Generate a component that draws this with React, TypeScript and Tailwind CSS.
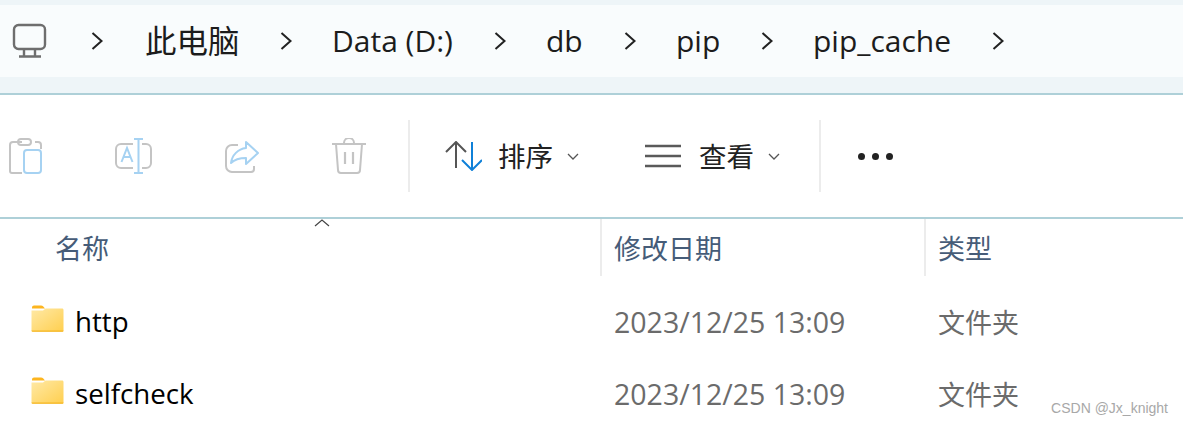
const font = "font-['Open_Sans','Noto_Sans_CJK_SC',sans-serif]";

function Chevron() {
  return (
    <svg width="14" height="20" viewBox="0 0 14 20" fill="none" stroke="#222" strokeWidth="2">
      <path d="M2.5 2l9 8-9 8" />
    </svg>
  );
}

function Crumb({ label, w, size }: { label: string; w: string; size: string }) {
  return (
    <div className={`flex items-center ${w}`}>
      <span className={`${size} leading-none text-[#1c1c1c] whitespace-nowrap`}>{label}</span>
    </div>
  );
}

function Folder() {
  return (
    <svg width="33" height="27" viewBox="0 0 33 27" className="-translate-y-[3px]">
      <defs>
        <linearGradient id="folderFill" x1="0" y1="0" x2="1" y2="1">
          <stop offset="0" stopColor="#ffe9a6" />
          <stop offset="1" stopColor="#ffcf4f" />
        </linearGradient>
      </defs>
      <path d="M1 2.500C1 1.400 1.900.5 3 .5h7c1 0 1.600.4 2.300 1L14 3.500H1z" fill="#fdb51f" />
      <path d="M0.500 5.500L12 5.500L14.500 3.500H31c1 0 1.500.6 1.500 1.500v20c0 1-.6 1.500-1.500 1.500H2c-1 0-1.500-.6-1.500-1.500z" fill="url(#folderFill)" />
      <path d="M.5 25.500h32v.5c0 .4-.5.8-1.500.8H2c-1 0-1.500-.4-1.500-.8z" fill="#f5b521" />
    </svg>
  );
}

function Row({ name, className }: { name: string; className: string }) {
  return (
    <div className={`flex items-center h-[72px] ${className}`}>
      <div className="w-[600px] pl-[31px] flex items-center">
        <Folder />
        <span className="ml-[11px] text-[27.7px] leading-none text-black">{name}</span>
      </div>
      <div className="w-[324px] pl-[14px] text-[28.500px] leading-none text-[#6b6b6b] whitespace-nowrap">2023/12/25 13:09</div>
      <div className="pl-[14px] text-[27px] leading-none text-[#6b6b6b]">文件夹</div>
    </div>
  );
}

function Caret() {
  return (
    <svg width="12" height="7" viewBox="0 0 12 7" fill="none" stroke="#555" strokeWidth="1.300">
      <path d="M1 1l5 5 5-5" />
    </svg>
  );
}

export default function App() {
  return (
    <div className={`relative w-[1183px] h-[425px] overflow-hidden bg-white ${font}`}>
      {/* address bar */}
      <div className="h-[95px] pt-[5px] pb-[17px] bg-[#eef5f8] border-b-2 border-[#aed0d8] box-border">
        <div className="h-[72px] bg-[#f9fcfd] flex items-center pl-[12px]">
          <svg width="36" height="36" viewBox="0 0 36 36" fill="none" stroke="#6e6e6e" strokeWidth="2.400" className="mr-[42px]">
            <rect x="2" y="2" width="31" height="24" rx="4.500" />
            <path d="M12 27v6M23 27v6M7 33.500h22" />
          </svg>
          <Chevron />
          <div className="w-[41px]" />
          <Crumb label="此电脑" w="w-[95px]" size="text-[31.500px]" />
          <div className="w-[39px]" />
          <Chevron />
          <div className="w-[39px]" />
          <Crumb label="Data (D:)" w="w-[122px]" size="text-[30px]" />
          <div className="w-[39px]" />
          <Chevron />
          <div className="w-[39px]" />
          <Crumb label="db" w="w-[38px]" size="text-[30px]" />
          <div className="w-[39px]" />
          <Chevron />
          <div className="w-[39px]" />
          <Crumb label="pip" w="w-[45px]" size="text-[30px]" />
          <div className="w-[39px]" />
          <Chevron />
          <div className="w-[39px]" />
          <Crumb label="pip_cache" w="w-[139px]" size="text-[30px]" />
          <div className="w-[39px]" />
          <Chevron />
        </div>
      </div>

      {/* toolbar */}
      <div className="h-[124px] border-b-2 border-[#aed0d8] box-border flex items-center">
        <svg width="34" height="37" viewBox="0 0 34 37" fill="none" strokeWidth="2" className="ml-[9px]">
          <path d="M13 4H4a3 3 0 0 0-3 3v26a2 2 0 0 0 2 2h10M26 4h3a3 3 0 0 1 3 3v4" stroke="#c4c4c4" />
          <rect x="9" y="1" width="13" height="6" rx="3" stroke="#c4c4c4" />
          <rect x="15" y="12" width="17" height="23" rx="3" stroke="#a6d2f2" />
        </svg>
        <svg width="37" height="36" viewBox="0 0 37 36" fill="none" strokeWidth="2" className="ml-[72px]">
          <path d="M18 6H6a5 5 0 0 0-5 5v14a5 5 0 0 0 5 5h12M27 6h4a5 5 0 0 1 5 5v14a5 5 0 0 1-5 5h-4" stroke="#c4c4c4" />
          <path d="M19 1h9M23.500 1v34M19 35h9M6.500 24l5.500-14 5.500 14M8.500 19h7" stroke="#a6d2f2" />
        </svg>
        <svg width="34" height="33" viewBox="0 0 34 33" fill="none" strokeWidth="2" className="ml-[73px]">
          <path d="M13 5H7a6 6 0 0 0-6 6v15a6 6 0 0 0 6 6h19a3 3 0 0 0 3-3v-3" stroke="#c4c4c4" />
          <path d="M21 2l12 11-12 11v-6c-6 0-11 1-15 5 1-8 7-14 15-15z" stroke="#a6d2f2" strokeLinejoin="round" />
        </svg>
        <svg width="34" height="36" viewBox="0 0 34 36" fill="none" stroke="#c4c4c4" strokeWidth="2" className="ml-[73px]">
          <path d="M0 6h34M12 6V5a5 5 0 0 1 10 0v1M4 6l2 26a3 3 0 0 0 3 3h16a3 3 0 0 0 3-3l2-26" />
          <path d="M13 14v12M21 14v12" strokeWidth="2.200" />
        </svg>

        <div className="w-[2px] h-[72px] bg-[#ececec] ml-[42px]" />

        <svg width="37" height="30" viewBox="0 0 37 30" fill="none" strokeWidth="2" className="ml-[35px]">
          <path d="M1 11L11 1l10 10M11 1v26" stroke="#555" />
          <path d="M17 19l10 10 10-10M27 1v27" stroke="#0f80d8" />
        </svg>
        <span className="ml-[16px] pt-[2px] text-[27.500px] leading-none text-[#222]">排序</span>
        <div className="ml-[14px]"><Caret /></div>
        <svg width="36" height="24" viewBox="0 0 36 24" fill="none" stroke="#5a5a5a" strokeWidth="2.600" className="ml-[66px]">
          <path d="M0 2h36M0 12h36M0 22h36" />
        </svg>
        <span className="ml-[18px] pt-[2px] text-[27.500px] leading-none text-[#222]">查看</span>
        <div className="ml-[14px]"><Caret /></div>
        <div className="w-[2px] h-[72px] bg-[#ececec] ml-[39px]" />
        <div className="ml-[37px] flex gap-[7px]">
          <div className="w-[7px] h-[7px] rounded-full bg-[#222]" />
          <div className="w-[7px] h-[7px] rounded-full bg-[#222]" />
          <div className="w-[7px] h-[7px] rounded-full bg-[#222]" />
        </div>
      </div>

      {/* column headers */}
      <div className="h-[57px] flex text-[27px] text-[#465c78]">
        <div className="w-[602px] pl-[55px] pt-[3px] flex items-center border-r-2 border-[#ececec]">名称</div>
        <div className="w-[324px] pl-[12px] pt-[3px] flex items-center border-r-2 border-[#ececec]">修改日期</div>
        <div className="pl-[12px] pt-[3px] flex items-center">类型</div>
      </div>
      <svg width="16" height="8" viewBox="0 0 16 8" fill="none" stroke="#444" strokeWidth="1.200" className="absolute left-[314px] top-[219px]">
        <path d="M1 7l7-6 7 6" />
      </svg>

      {/* rows */}
      <Row name="http" className="mt-[10px]" />
      <Row name="selfcheck" className="" />

      <span className="absolute right-[15px] top-[401px] text-[14px] leading-none text-[#a8a8a8] font-['Liberation_Sans',sans-serif]">CSDN @Jx_knight</span>
    </div>
  );
}
